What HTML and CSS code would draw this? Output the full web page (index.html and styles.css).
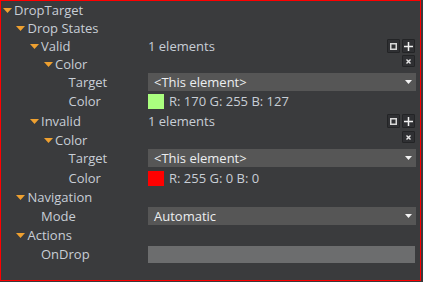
FILE: index.html
```html
<!DOCTYPE html>
<html>
<head>
<meta charset="utf-8">
<link rel="stylesheet" href="styles.css">
</head>
<body>
<div class="panel">
  <div class="row h18">
    <div class="label l0"><span class="arrow"><svg width="9" height="5" viewBox="0 0 9 5"><polygon points="0,0 9,0 4.5,5" fill="#eea030"/></svg></span>DropTarget</div>
  </div>
  <div class="row h18">
    <div class="label l1"><span class="arrow"><svg width="9" height="5" viewBox="0 0 9 5"><polygon points="0,0 9,0 4.5,5" fill="#eea030"/></svg></span>Drop States</div>
  </div>
  <div class="row h18">
    <div class="label l2"><span class="arrow"><svg width="9" height="5" viewBox="0 0 9 5"><polygon points="0,0 9,0 4.5,5" fill="#eea030"/></svg></span>Valid</div>
    <div class="value">
      <span class="vtext">1 elements</span>
      <div class="btns">
        <span class="btn"><svg width="7" height="7" viewBox="0 0 7 7"><rect x="0.75" y="0.75" width="5.5" height="5.5" fill="none" stroke="#d8d8d8" stroke-width="1.5"/></svg></span>
        <span class="btn"><svg width="9" height="9" viewBox="0 0 9 9"><path d="M4.5 0V9M0 4.5H9" stroke="#f2f2f2" stroke-width="1.5"/></svg></span>
      </div>
    </div>
  </div>
  <div class="row h18">
    <div class="label l3"><span class="arrow"><svg width="9" height="5" viewBox="0 0 9 5"><polygon points="0,0 9,0 4.5,5" fill="#eea030"/></svg></span>Color</div>
    <div class="value"><div class="btns top"><span class="btn close"><svg width="5" height="5" viewBox="0 0 5 5"><path d="M0.5 0.5L4.5 4.5M4.5 0.5L0.5 4.5" stroke="#e8e8e8" stroke-width="1.4"/></svg></span></div></div>
  </div>
  <div class="row h19">
    <div class="label l4"><span class="arrow"></span>Target</div>
    <div class="value"><div class="select"><span>&lt;This element&gt;</span><svg width="7" height="4" viewBox="0 0 7 4"><polygon points="0,0 7,0 3.5,4" fill="#f4f4f4"/></svg></div></div>
  </div>
  <div class="row h20">
    <div class="label l4"><span class="arrow"></span>Color</div>
    <div class="value"><span class="swatch green"></span><span class="vtext">R: 170 G: 255 B: 127</span></div>
  </div>
  <div class="row h19">
    <div class="label l2"><span class="arrow"><svg width="9" height="5" viewBox="0 0 9 5"><polygon points="0,0 9,0 4.5,5" fill="#eea030"/></svg></span>Invalid</div>
    <div class="value">
      <span class="vtext">1 elements</span>
      <div class="btns">
        <span class="btn"><svg width="7" height="7" viewBox="0 0 7 7"><rect x="0.75" y="0.75" width="5.5" height="5.5" fill="none" stroke="#d8d8d8" stroke-width="1.5"/></svg></span>
        <span class="btn"><svg width="9" height="9" viewBox="0 0 9 9"><path d="M4.5 0V9M0 4.5H9" stroke="#f2f2f2" stroke-width="1.5"/></svg></span>
      </div>
    </div>
  </div>
  <div class="row h18">
    <div class="label l3"><span class="arrow"><svg width="9" height="5" viewBox="0 0 9 5"><polygon points="0,0 9,0 4.5,5" fill="#eea030"/></svg></span>Color</div>
    <div class="value"><div class="btns top"><span class="btn close"><svg width="5" height="5" viewBox="0 0 5 5"><path d="M0.5 0.5L4.5 4.5M4.5 0.5L0.5 4.5" stroke="#e8e8e8" stroke-width="1.4"/></svg></span></div></div>
  </div>
  <div class="row h20">
    <div class="label l4"><span class="arrow"></span>Target</div>
    <div class="value"><div class="select"><span>&lt;This element&gt;</span><svg width="7" height="4" viewBox="0 0 7 4"><polygon points="0,0 7,0 3.5,4" fill="#f4f4f4"/></svg></div></div>
  </div>
  <div class="row h19">
    <div class="label l4"><span class="arrow"></span>Color</div>
    <div class="value"><span class="swatch red"></span><span class="vtext">R: 255 G: 0 B: 0</span></div>
  </div>
  <div class="row h19">
    <div class="label l1"><span class="arrow"><svg width="9" height="5" viewBox="0 0 9 5"><polygon points="0,0 9,0 4.5,5" fill="#eea030"/></svg></span>Navigation</div>
  </div>
  <div class="row h19">
    <div class="label l2"><span class="arrow"></span>Mode</div>
    <div class="value"><div class="select"><span>Automatic</span><svg width="7" height="4" viewBox="0 0 7 4"><polygon points="0,0 7,0 3.5,4" fill="#f4f4f4"/></svg></div></div>
  </div>
  <div class="row h19">
    <div class="label l1"><span class="arrow"><svg width="9" height="5" viewBox="0 0 9 5"><polygon points="0,0 9,0 4.5,5" fill="#eea030"/></svg></span>Actions</div>
  </div>
  <div class="row h19">
    <div class="label l2"><span class="arrow"></span>OnDrop</div>
    <div class="value"><div class="field"></div></div>
  </div>
</div>
</body>
</html>
```

FILE: styles.css
```css
html, body {
  margin: 0;
  padding: 0;
  background: #3a3b3d;
}
.panel {
  box-sizing: border-box;
  width: 421px;
  height: 281px;
  border: 1px solid #ff0000;
  background: #3a3b3d;
  padding: 0 4px 0 0;
  font-family: "Open Sans", "Noto Sans", sans-serif;
  font-size: 13px;
  color: #c8ced6;
}
.row {
  display: flex;
  align-items: flex-start;
}
.h18 { height: 18px; }
.h19 { height: 19px; }
.h20 { height: 20px; }
.label {
  width: 147px;
  flex: none;
  display: flex;
  align-items: center;
  height: 18px;
  line-height: 18px;
  white-space: nowrap;
  box-sizing: border-box;
}
.l0 { padding-left: 0; }
.l1 { padding-left: 13.5px; }
.l2 { padding-left: 27px; }
.l3 { padding-left: 41px; }
.l4 { padding-left: 54.5px; }
.arrow {
  width: 13px;
  flex: none;
  display: flex;
  align-items: center;
  padding-left: 1.5px;
  box-sizing: border-box;
}
.arrow svg { display: block; }
.value {
  flex: 1;
  display: flex;
  align-items: center;
  height: 18px;
  line-height: 18px;
  min-width: 0;
}
.vtext { white-space: nowrap; }
.btns {
  margin-left: auto;
  display: flex;
  gap: 2px;
  margin-right: 1px;
}
.btns.top { align-self: flex-start; }
.btn {
  box-sizing: border-box;
  width: 13px;
  height: 14px;
  background: #2f3033;
  border: 1px solid #232426;
  border-radius: 1px;
  display: flex;
  align-items: center;
  justify-content: center;
}
.btn svg { display: block; }
.btn.close { height: 12px; }
.select {
  flex: 1;
  height: 18px;
  background: #565656;
  color: #eceef0;
  display: flex;
  align-items: center;
  justify-content: space-between;
  padding: 0 4px 0 6px;
  box-sizing: border-box;
}
.select svg { display: block; }
.swatch {
  width: 16px;
  height: 15px;
  flex: none;
  margin-right: 5px;
}
.green { background: #aaff7f; }
.red { background: #ff0000; }
.field {
  flex: 1;
  height: 17px;
  margin-right: 1px;
  background: #6c6d6e;
}
```
